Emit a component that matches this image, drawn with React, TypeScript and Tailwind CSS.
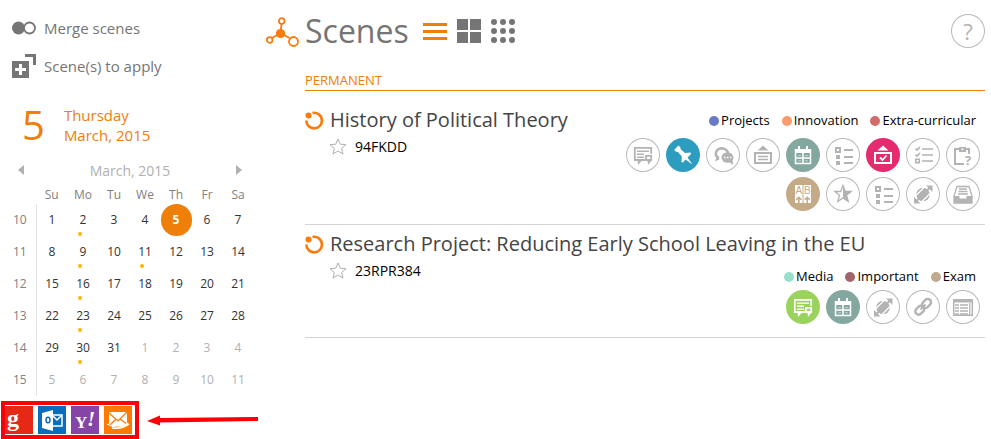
import type { ReactNode } from "react";

type IconName =
  | "comment"
  | "pin"
  | "chat"
  | "board"
  | "calendar"
  | "list"
  | "boardCheck"
  | "checklist"
  | "clipboard"
  | "ab"
  | "star"
  | "expand"
  | "archive"
  | "link"
  | "table";

const icons: Record<IconName, ReactNode> = {
  comment: (
    <g fill="none" stroke="currentColor" strokeWidth="1.500">
      <path d="M19 22H8.800V9.800h16.400V16" strokeWidth="1.800" />
      <path d="M11 13.250h12M11 16.250h7M11 19.250h7" />
      <path d="M20 17.800h5.200V22H20z" strokeWidth="1.800" />
      <path d="M11.500 22h5l-4.500 5zM21.500 22h4.500l-4 5z" fill="currentColor" stroke="none" />
    </g>
  ),
  pin: (
    <path
      fill="currentColor"
      d="M8 12 12.500 7.500 14.500 9.500 14.500 11 19 15 24.500 14.500 25 16 21.500 19.500 26.500 26.500 19.500 21.500 17 24.500 15.500 24 15.800 18.500 12 14 10.500 14z"
    />
  ),
  chat: (
    <g>
      <path d="M10.500 19.500L9 23.500l5-2.500z" fill="currentColor" />
      <path
        d="M13 20c-2.500-1-3.500-3-3-5.500.8-3 4-4.500 7-4 3 .6 5.500 3 5 5.500"
        fill="none"
        stroke="currentColor"
        strokeWidth="2.600"
      />
      <ellipse cx="21.500" cy="19.500" rx="6" ry="5.200" fill="currentColor" />
      <path d="M22 23l5 4-.5-5z" fill="currentColor" />
      <path d="M18 19.500h1.500M21 19.500h1.500M24 19.500h1.500" stroke="white" strokeWidth="1.500" />
    </g>
  ),
  board: (
    <g>
      <path d="M17 7.500l5.500 5h-11z" fill="currentColor" />
      <path d="M9 15h16v10H9z" fill="none" stroke="currentColor" strokeWidth="2" />
      <path d="M12 18.500h10M12 21.500h10" stroke="currentColor" strokeWidth="1.400" />
    </g>
  ),
  calendar: (
    <g fill="none" stroke="currentColor">
      <path d="M9.500 12h15v13.500h-15z" strokeWidth="1.500" />
      <path d="M9 13h16" strokeWidth="4" />
      <path d="M13 8v5M21 8v5" strokeWidth="2" />
      <path d="M9 20h16M17 14v12" strokeWidth="1.500" />
      <path d="M12 17.500h3M19 17.500h3M12 22.800h3M19 22.800h3" strokeWidth="1" opacity="0.5" />
    </g>
  ),
  list: (
    <g stroke="currentColor" strokeWidth="2">
      <path d="M10 10h4v4h-4z" fill="none" />
      <path d="M10 17h4v4h-4zM10 23h4v4h-4z" fill="currentColor" stroke="none" />
      <path d="M18 12h9M18 19h9M18 25h9" />
    </g>
  ),
  boardCheck: (
    <g>
      <path d="M17 7.500l5.500 5h-11z" fill="currentColor" />
      <path d="M9 15h16v10H9z" fill="none" stroke="currentColor" strokeWidth="2" />
      <path d="M14 19.500l2.500 2.500 4-4.500" fill="none" stroke="currentColor" strokeWidth="1.800" />
    </g>
  ),
  checklist: (
    <g fill="none" stroke="currentColor" strokeWidth="1.600">
      <path d="M9.500 10.500l1.500 1.500 3-3M9.500 16.500l1.500 1.500 3-3M9.800 21.300h3.400v3.400H9.800z" />
      <path d="M16 11h11M16 17h11M16 23h11" />
    </g>
  ),
  clipboard: (
    <g>
      <path
        d="M14 11H9v15h9M19 11h4v5"
        fill="none"
        stroke="currentColor"
        strokeWidth="2"
      />
      <path d="M13 9h7v5h-7z" fill="currentColor" />
      <path d="M15.500 10.500h2v1.500h-2z" fill="white" />
      <text
        x="19"
        y="27"
        fill="currentColor"
        fontSize="13"
        fontWeight="700"
        fontFamily="Open Sans, sans-serif"
      >
        ?
      </text>
    </g>
  ),
  ab: (
    <g>
      <path d="M9 8h7.500v18H9zM17.500 8H25v18h-7.500z" fill="currentColor" />
      <g fill="#c5aa87" fontSize="10" fontFamily="Liberation Sans, sans-serif">
        <text x="9.400" y="17">A</text>
        <text x="18" y="17">B</text>
      </g>
      <path
        d="M12.800 26v-5M10.300 22.800l2.500-2.500 2.500 2.500M21.300 26v-5M18.800 22.800l2.500-2.500 2.500 2.500"
        fill="none"
        stroke="#c5aa87"
        strokeWidth="1.600"
      />
    </g>
  ),
  star: (
    <g>
      <path
        d="M17 8.500l2.300 6h5.900l-4.700 3.800 1.800 6.200L17 21l-5.300 3.500 1.800-6.200-4.700-3.800h5.900z"
        fill="none"
        stroke="currentColor"
        strokeWidth="1.300"
      />
      <path d="M17 8.500l2.300 6h5.900l-4.700 3.800 1.800 6.200L17 21z" fill="currentColor" />
    </g>
  ),
  expand: (
    <g>
      <circle cx="17" cy="17.500" r="6.800" fill="currentColor" />
      <path d="M20 8.500h6.500V15zM8 20v6.500h6.500z" fill="currentColor" />
      <path d="M9 25.500l4-4M21 13.500l4-4" stroke="currentColor" strokeWidth="2" />
      <path d="M9.500 19l9-9M15.500 25l9-9" stroke="white" strokeWidth="1.200" />
    </g>
  ),
  archive: (
    <g>
      <path d="M11 9.500h12l3 9.500v7H8v-7z" fill="none" stroke="currentColor" strokeWidth="1.300" />
      <path d="M8 19h5.500v2.500h7V19H26v7H8z" fill="currentColor" />
      <path d="M13 12h8M12.500 14.500h9M12 17h10" stroke="currentColor" strokeWidth="1.300" />
    </g>
  ),
  link: (
    <g fill="none" stroke="currentColor" strokeWidth="2.400" transform="rotate(-45 17 17)">
      <rect x="7.500" y="13.700" width="10" height="6.600" rx="3.300" />
      <rect x="17" y="13.700" width="10" height="6.600" rx="3.300" />
      <path d="M13.500 17h7" strokeWidth="2" />
    </g>
  ),
  table: (
    <g fill="none" stroke="currentColor">
      <path d="M7.700 9.700h18.600v15.600H7.700z" strokeWidth="1.500" />
      <path d="M7 11h20" strokeWidth="3" />
      <path d="M9 15h4M9 18h4M9 21h4M9 24h4M14 15h8M14 18h8M14 21h8M14 24h8" strokeWidth="1.600" />
      <path d="M23.700 13v12" strokeWidth="1.200" />
    </g>
  ),
};

interface Tool {
  icon: IconName;
  label: string;
  color?: string;
}

interface Scene {
  title: string;
  code: string;
  tags: { name: string; color: string }[];
  tools: Tool[];
}

const scenes: Scene[] = [
  {
    title: "History of Political Theory",
    code: "94FKDD",
    tags: [
      { name: "Projects", color: "bg-[#6a79c6]" },
      { name: "Innovation", color: "bg-[#fa9a6d]" },
      { name: "Extra-curricular", color: "bg-[#d26c6c]" },
    ],
    tools: [
      { icon: "comment", label: "Comments" },
      { icon: "pin", label: "Pin", color: "bg-[#2c9dbf]" },
      { icon: "chat", label: "Chat" },
      { icon: "board", label: "Board" },
      { icon: "calendar", label: "Calendar", color: "bg-[#84a79f]" },
      { icon: "list", label: "List" },
      { icon: "boardCheck", label: "Attendance", color: "bg-[#e62a70]" },
      { icon: "checklist", label: "Checklist" },
      { icon: "clipboard", label: "Survey" },
      { icon: "ab", label: "Groups", color: "bg-[#c5aa87]" },
      { icon: "star", label: "Marks" },
      { icon: "list", label: "Tasks" },
      { icon: "expand", label: "Share" },
      { icon: "archive", label: "Archive" },
    ],
  },
  {
    title: "Research Project: Reducing Early School Leaving in the EU",
    code: "23RPR384",
    tags: [
      { name: "Media", color: "bg-[#97dfcb]" },
      { name: "Important", color: "bg-[#a0646c]" },
      { name: "Exam", color: "bg-[#c0a98c]" },
    ],
    tools: [
      { icon: "comment", label: "Comments", color: "bg-[#99d35c]" },
      { icon: "calendar", label: "Calendar", color: "bg-[#84a79f]" },
      { icon: "expand", label: "Share" },
      { icon: "link", label: "Links" },
      { icon: "table", label: "Table" },
    ],
  },
];

const weekDays = ["Su", "Mo", "Tu", "We", "Th", "Fr", "Sa"];

const weeks = [
  { week: 10, days: [1, 2, 3, 4, 5, 6, 7] },
  { week: 11, days: [8, 9, 10, 11, 12, 13, 14] },
  { week: 12, days: [15, 16, 17, 18, 19, 20, 21] },
  { week: 13, days: [22, 23, 24, 25, 26, 27, 28] },
  { week: 14, days: [29, 30, 31, 1, 2, 3, 4] },
  { week: 15, days: [5, 6, 7, 8, 9, 10, 11] },
];

const today = 5;
const eventDays = [2, 9, 11, 16, 23, 30];

function DayCell({ week, day }: { week: number; day: number }) {
  const nextMonth = week >= 14 && day < 20;
  const isToday = !nextMonth && day === today;

  return (
    <td className="p-0">
      <button
        className={`relative flex h-8 w-[31px] items-center justify-center rounded-full ${
          isToday
            ? "bg-[#ee800a] font-bold text-white"
            : nextMonth
              ? "text-[#b0b0b0]"
              : "text-[#333]"
        }`}
      >
        {day}
        {!nextMonth && eventDays.includes(day) && (
          <span className="absolute bottom-0 left-2.5 h-1 w-1 rounded-full bg-[#ffb400]" />
        )}
      </button>
    </td>
  );
}

function Calendar() {
  return (
    <div className="pl-1">
      <div className="flex h-8 items-center justify-between pl-3.5 pr-4 text-[14px] text-[#b0b0b0]">
        <button aria-label="Previous month">
          <svg width="6" height="10" viewBox="0 0 6 10" fill="currentColor">
            <path d="M6 0v10L0 5z" />
          </svg>
        </button>
        <span>March, 2015</span>
        <button aria-label="Next month">
          <svg width="6" height="10" viewBox="0 0 6 10" fill="currentColor">
            <path d="M0 0v10l6-5z" />
          </svg>
        </button>
      </div>
      <table className="border-collapse text-center text-[12px]">
        <thead>
          <tr className="h-[18px] text-[#808080]">
            <th className="w-8 p-0" />
            {weekDays.map((d) => (
              <th key={d} className="p-0 font-normal leading-4">
                {d}
              </th>
            ))}
          </tr>
        </thead>
        <tbody>
          {weeks.map(({ week, days }) => (
            <tr key={week}>
              <td className="border-r border-[#e4e4e4] p-0 text-[#808080]">{week}</td>
              {days.map((day) => (
                <DayCell key={day} week={week} day={day} />
              ))}
            </tr>
          ))}
        </tbody>
      </table>
    </div>
  );
}

function MailLinks() {
  return (
    <div className="flex items-center gap-2 pl-px pt-[5px]">
      <div className="flex h-[38px] w-[138px] items-center gap-[5px] border-4 border-[#fb0007]">
        <a
          href="#google"
          aria-label="Google"
          className="flex h-7 w-7 items-start bg-[#e62916] pl-0.5 font-['Liberation_Serif',serif] text-[24px] font-bold leading-6 text-white"
        >
          g
        </a>
        <a href="#outlook" aria-label="Outlook" className="h-7 w-7 bg-[#0a6cbd]">
          <svg width="28" height="28" viewBox="0 0 28 28">
            <path d="M4 7l11-3v21L4 22z" fill="white" />
            <path d="M15 9h9v11h-9" fill="none" stroke="white" strokeWidth="1.500" />
            <path d="M15 10l4 4 5-5" fill="none" stroke="white" strokeWidth="1.500" />
            <ellipse cx="10" cy="14" rx="2" ry="2.800" fill="none" stroke="#0a6cbd" strokeWidth="1.500" />
          </svg>
        </a>
        <a href="#yahoo" aria-label="Yahoo" className="h-7 w-7 bg-[#8644a6]">
          <svg width="28" height="28" viewBox="0 0 28 28">
            <g fill="white" fontWeight="700" fontFamily="Liberation Serif, serif">
              <text x="4" y="22" fontSize="17">
                Y
              </text>
              <text x="16" y="20" fontSize="21" fontStyle="italic">
                !
              </text>
            </g>
          </svg>
        </a>
        <a href="#hotmail" aria-label="Hotmail" className="h-7 w-7 bg-[#ff7800]">
          <svg width="28" height="28" viewBox="0 0 28 28">
            <path d="M5 6h18v14H5z" fill="white" />
            <path d="M5 7l9 8 9-9M5 20l7-7M23 18l-7-5" fill="none" stroke="#ff7800" strokeWidth="1.200" />
            <path d="M3 18c7 4 15 4 21-1M8 22c6 1 12 0 17-4" fill="none" stroke="white" strokeWidth="1.300" />
          </svg>
        </a>
      </div>
      <svg className="flex-1" height="12" viewBox="0 0 111 12" fill="#fb0007">
        <path d="M0 7L13 1.500V4L111 3v4L13 8.500V11.500z" />
      </svg>
    </div>
  );
}

function Sidebar() {
  return (
    <aside className="w-[258px] shrink-0">
      <div className="flex flex-col gap-2 pl-3 pt-[13px] text-[15px] text-[#757575]">
        <button className="flex h-[30px] items-center gap-2">
          <svg width="24" height="14" viewBox="0 0 24 14">
            <circle cx="6.500" cy="7" r="6.500" fill="currentColor" />
            <circle cx="17.500" cy="7" r="5.500" fill="white" stroke="currentColor" strokeWidth="1.800" />
          </svg>
          Merge scenes
        </button>
        <button className="flex h-[30px] items-center gap-2">
          <svg width="24" height="24" viewBox="0 0 24 24">
            <path d="M0 7h17v17H0zM13 0h11v11h-3V3h-8z" fill="currentColor" />
            <path d="M7 10h3v4h4v3h-4v4H7v-4H3v-3h4z" fill="white" />
          </svg>
          Scene(s) to apply
        </button>
      </div>
      <div className="flex items-center gap-[19px] pb-[9px] pl-[22px] pt-6 text-[#ee800a]">
        <span className="text-[40px] leading-10">5</span>
        <p className="text-[15px] leading-5">
          Thursday
          <br />
          March, 2015
        </p>
      </div>
      <Calendar />
      <MailLinks />
    </aside>
  );
}

function SceneRow({ scene }: { scene: Scene }) {
  const { title, code, tags, tools } = scene;

  return (
    <article className="flow-root border-b border-[#d3d3d3] pb-[13px] pt-[3px]">
      <svg
        className="mr-1.5 inline-block align-middle"
        width="19"
        height="19"
        viewBox="0 0 19 19"
      >
        <path
          d="M7.500 1.900A7.800 7.800 0 1 1 1.300 9.500"
          fill="none"
          stroke="#fb7a0c"
          strokeWidth="2.600"
        />
        <circle cx="3.500" cy="4.500" r="3" fill="#fb7a0c" />
      </svg>
      <h2 className="inline align-middle text-[20px] leading-8 text-[#444]">{title}</h2>
      <div className="float-right max-w-[360px] pr-[5px] pt-1">
        <ul
          className={`flex h-[26px] items-center justify-end gap-3 pr-1 text-[13px] text-black ${
            tools.length > 9 ? "mb-1" : ""
          }`}
        >
          {tags.map((tag) => (
            <li key={tag.name} className="flex items-center gap-0.5">
              <span className={`h-2.5 w-2.5 rounded-full ${tag.color}`} />
              {tag.name}
            </li>
          ))}
        </ul>
        <div className="flex flex-wrap justify-end gap-x-1.5 gap-y-[5px]">
          {tools.map((tool) => (
            <button
              key={tool.label}
              aria-label={tool.label}
              className={`h-[34px] w-[34px] rounded-full ${
                tool.color
                  ? `${tool.color} text-white`
                  : "text-[#b3b3b3] shadow-[inset_0_0_0_1px_#b8b8b8]"
              }`}
            >
              <svg width="34" height="34" viewBox="0 0 34 34">
                {icons[tool.icon]}
              </svg>
            </button>
          ))}
        </div>
      </div>
      <div className="flex h-5 items-center gap-2 pl-6 text-[14px] text-black">
        <svg width="18" height="17" viewBox="0 0 18 17">
          <path
            d="M9 1l2.200 5.200 5.800.5-4.400 3.800 1.400 5.500L9 13l-5 3 1.400-5.500L1 6.700l5.800-.5z"
            fill="none"
            stroke="#b0b0b0"
          />
        </svg>
        {code}
      </div>
    </article>
  );
}

export default function App() {
  return (
    <div className="flex bg-white font-['Open_Sans',sans-serif]">
      <Sidebar />
      <main className="min-w-0 flex-1 pl-2 pr-1.5">
        <header className="flex h-[62px] items-center">
          <svg width="33" height="31" viewBox="0 0 33 31" className="mr-1.5">
            <g fill="none" stroke="#fb7a0c" strokeWidth="1.800">
              <path d="M14.500 16l1.200-9M14.500 17L6 22M14.500 17l9 5" />
              <circle cx="15.700" cy="5" r="2.800" />
              <circle cx="3.700" cy="24" r="2.800" />
              <circle cx="27.500" cy="25.500" r="4.500" />
            </g>
            <circle cx="14.500" cy="17.500" r="4.600" fill="#fb7a0c" />
          </svg>
          <h1 className="text-[32px] leading-10 text-[#757575]">Scenes</h1>
          <nav className="ml-3.5 flex gap-2.5 text-[#757575]">
            <button aria-label="List view" className="text-[#ee800a]">
              <svg width="24" height="24" viewBox="0 0 24 24" fill="currentColor">
                <path d="M0 4h24v3H0zM0 11h24v3H0zM0 18h24v3H0z" />
              </svg>
            </button>
            <button aria-label="Grid view">
              <svg width="24" height="24" viewBox="0 0 24 24" fill="currentColor">
                <path d="M0 0h11v11H0zM13 0h11v11H13zM0 13h11v11H0zM13 13h11v11H13z" />
              </svg>
            </button>
            <button aria-label="Icon view">
              <svg width="24" height="24" viewBox="0 0 24 24" fill="currentColor">
                {[3, 12, 21].map((y) =>
                  [3, 12, 21].map((x) => <circle key={`${x}-${y}`} cx={x} cy={y} r="3" />)
                )}
              </svg>
            </button>
          </nav>
          <button
            aria-label="Help"
            className="ml-auto h-[34px] w-[34px] rounded-full text-[22px] leading-8 text-[#b3b3b3] shadow-[inset_0_0_0_1px_#b8b8b8]"
          >
            ?
          </button>
        </header>
        <section className="pl-[39px]">
          <h2 className="mb-2.5 border-b border-[#ee800a] pt-2 text-[13px] leading-5 text-[#ee800a]">
            PERMANENT
          </h2>
          {scenes.map((scene) => (
            <SceneRow key={scene.code} scene={scene} />
          ))}
        </section>
      </main>
    </div>
  );
}
